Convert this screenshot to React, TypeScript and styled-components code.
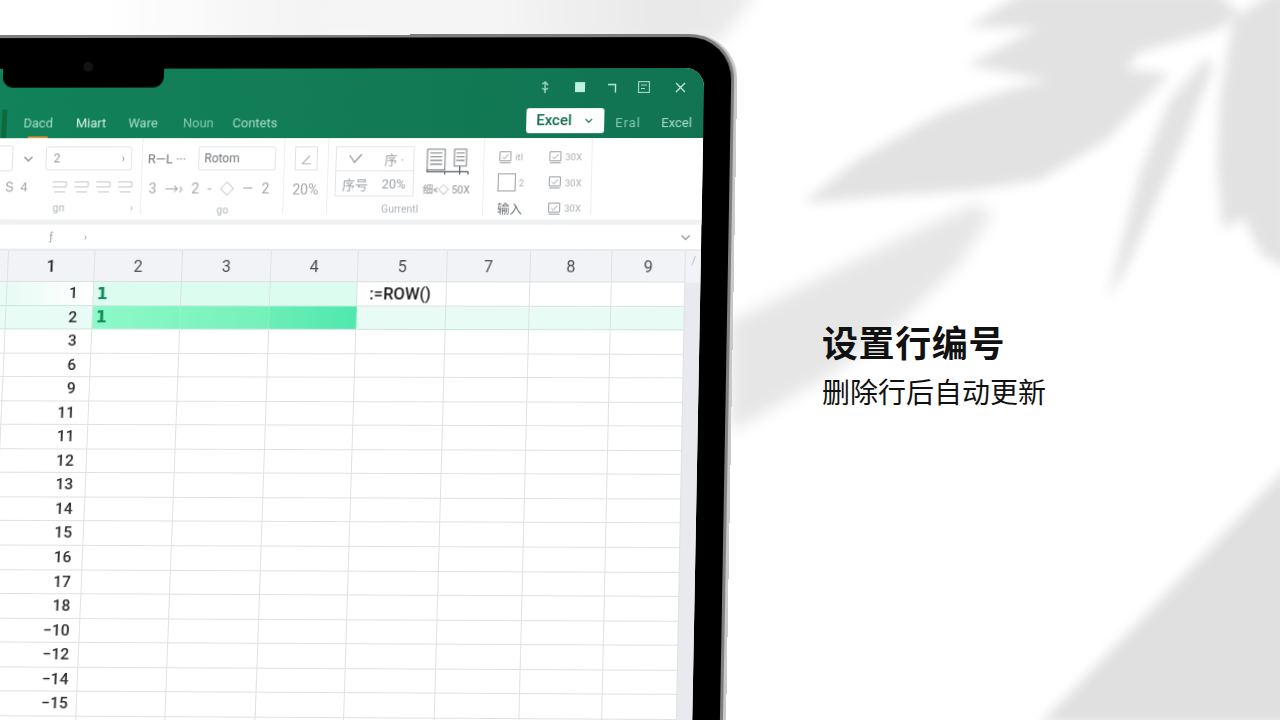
import React from "react";
import styled, { createGlobalStyle } from "styled-components";

const GlobalStyle = createGlobalStyle`
  html, body {
    margin: 0;
    padding: 0;
    background: #fff;
  }
  body {
    font-family: "Roboto", "Noto Sans CJK SC", sans-serif;
  }
`;

const COLUMNS = "73px 87px 88px 89px 87px 89px 83px 81px 73px";
const ROWS = ["1", "2", "3", "6", "9", "11", "11", "12", "13", "14", "15", "16", "17", "18", "−10", "−12", "−14", "−15", "", ""];
const HEADERS = ["", "1", "2", "3", "4", "5", "7", "8", "9"];

function LeafShadows() {
  return (
    <Shadows viewBox="0 0 1280 720">
      <defs>
        <filter id="soft" x="-10%" y="-10%" width="120%" height="120%">
          <feGaussianBlur stdDeviation="6" />
        </filter>
        <filter id="softer" x="-20%" y="-20%" width="140%" height="140%">
          <feGaussianBlur stdDeviation="8" />
        </filter>
        <linearGradient id="topFade" x1="0" x2="1" y1="0" y2="0">
          <stop offset="0" stopColor="#fff" />
          <stop offset="0.3" stopColor="#f4f4f4" />
          <stop offset="0.6" stopColor="#f5f5f5" />
          <stop offset="0.85" stopColor="#e8e8e8" />
          <stop offset="1" stopColor="#ebebeb" />
        </linearGradient>
      </defs>
      <polygon points="100,-20 760,-20 745,10 715,45 100,45" fill="url(#topFade)" filter="url(#softer)" />
      <g filter="url(#soft)" fill="#e2e2e2">
        <polygon points="1027,-10 967,27 1037,28 967,65 1047,80 1007,90 940,113 857,160 803,203 900,195 973,190 1040,180 1107,140 1170,73 1127,70 1137,53 1217,30 1240,13 1213,-10" />
        <polygon points="1207,57 1170,100 1140,173 1107,300 1127,267 1157,200 1187,133 1213,67" />
        <polygon points="1275,-10 1233,20 1220,100 1217,167 1223,230 1243,217 1262,255 1290,270 1290,-10" />
      </g>
      <polygon points="1290,465 1040,724 1290,724" fill="#e0e0e0" filter="url(#soft)" />
      <polygon points="730,322 907,235 973,205 993,212 957,267 900,322 830,375 730,432" fill="#e6e6e6" filter="url(#softer)" />
    </Shadows>
  );
}

function DocPair() {
  return (
    <DocIcon width="43" height="28" viewBox="0 0 46 30" fill="none" stroke="#7c8184" strokeWidth="1.1">
      <rect x="1" y="1" width="19" height="22" />
      <path d="M4 5h13M4 9h13M4 13h13M4 17h13" />
      <rect x="30" y="1" width="13" height="18" />
      <path d="M32 5h9M32 9h9M32 13h9" />
      <path d="M1 23v2h44v3M20 25v3M36 19v9" strokeWidth="1.2" stroke="#555a5d" />
    </DocIcon>
  );
}

function TickBox() {
  return (
    <svg width="14" height="14" viewBox="0 0 14 14" fill="none" stroke="#9b9fa2" strokeWidth="1">
      <path d="M1.5 1.5h11v9h-11zM1.5 12.5h11" />
      <path d="M4 6.5l2 2 4-4.5" />
    </svg>
  );
}

function AlignIcon() {
  return (
    <svg width="16" height="13" viewBox="0 0 16 13" fill="none" stroke="#c2c6c9" strokeWidth="1">
      <path d="M1 1.5h14M1 6.5h14M3 11.5h11M15 1.5v5" />
    </svg>
  );
}

function Chevron({ color = "#8d9296" }: { color?: string }) {
  return (
    <svg width="11" height="7" viewBox="0 0 11 7" fill="none" stroke={color} strokeWidth="1.5">
      <path d="M1.5 1.5L5.5 5.5L9.5 1.5" />
    </svg>
  );
}

function WindowControls() {
  return (
    <Controls>
      <svg width="10" height="14" viewBox="0 0 10 14" fill="none" stroke="#9fd8c3" strokeWidth="1.4">
        <path d="M5 1v12M2 4l3-2 3 3M2 8l3 2 3-2" />
      </svg>
      <FilledSquare />
      <svg width="10" height="11" viewBox="0 0 10 11" fill="none" stroke="#bfe9da" strokeWidth="1.4">
        <path d="M1 2.5h7.5v8" />
      </svg>
      <svg width="12" height="12" viewBox="0 0 12 12" fill="none" stroke="#a9dcc9" strokeWidth="1.1">
        <rect x="0.6" y="0.6" width="10.8" height="10.8" />
        <path d="M3 4h6M3 7.5h4" />
      </svg>
      <CloseIcon width="11" height="11" viewBox="0 0 11 11" fill="none" stroke="#c8ecdf" strokeWidth="1.3">
        <path d="M1 1l9 9M10 1l-9 9" />
      </CloseIcon>
    </Controls>
  );
}

function Ribbon() {
  return (
    <RibbonBar>
      <Group $width={204}>
        <ToolRow>
          <DropBox />
          <ChevronSlot>
            <Chevron />
          </ChevronSlot>
          <Field $width={87}>
            2<FieldEnd>›</FieldEnd>
          </Field>
        </ToolRow>
        <ToolRow $left={66}>
          <ToolText $width={47}>Տ&nbsp; 4</ToolText>
          <AlignSet>
            <AlignIcon />
            <AlignIcon />
            <AlignIcon />
            <AlignIcon />
          </AlignSet>
        </ToolRow>
        <GroupLabel $left={115}>
          gп<LabelEnd>›</LabelEnd>
        </GroupLabel>
      </Group>
      <Group $width={143}>
        <ToolRow $left={5}>
          <ToolText $width={51} $dark>
            R—L ···
          </ToolText>
          <Field $width={78} $dark>
            Rotom
          </Field>
        </ToolRow>
        <ToolRow $left={7}>
          <ToolText $width={130} $spread>
            3 →› 2 - ◇ — 2
          </ToolText>
        </ToolRow>
        <GroupLabel $left={76}>go</GroupLabel>
      </Group>
      <Group $width={44} $center>
        <SmallBox>∠</SmallBox>
        <PercentText>20%</PercentText>
      </Group>
      <Group $width={156}>
        <TableRow>
          <MiniTable>
            <MiniCell>
              <svg width="14" height="11" viewBox="0 0 14 11" fill="none" stroke="#8d9296" strokeWidth="1.2">
                <path d="M1 2l5 7 7-8" />
              </svg>
            </MiniCell>
            <MiniCell>序 ·</MiniCell>
            <MiniCell>序号</MiniCell>
            <MiniCell>20%</MiniCell>
          </MiniTable>
          <DocColumn>
            <DocPair />
            <DocCaption>细&lt;◇ 50X</DocCaption>
          </DocColumn>
        </TableRow>
        <GroupLabel $left={54}>Gurrentl</GroupLabel>
      </Group>
      <Group $width={108} $last>
        <StackGrid>
          <StackCell>
            <TickBox />
            <TinyText>itl</TinyText>
          </StackCell>
          <StackCell>
            <TickBox />
            <TinyText>30X</TinyText>
          </StackCell>
          <StackCell>
            <BigSquare />
            <TinyText>2</TinyText>
          </StackCell>
          <StackCell>
            <TickBox />
            <TinyText>30X</TinyText>
          </StackCell>
          <StackCell>
            <InputText>输入</InputText>
          </StackCell>
          <StackCell>
            <TickBox />
            <TinyText>30X</TinyText>
          </StackCell>
        </StackGrid>
      </Group>
    </RibbonBar>
  );
}

function Sheet() {
  return (
    <SheetArea>
      <Cells>
        <SheetRow>
          {HEADERS.map((label, i) => (
            <HeaderCell key={i}>{label}</HeaderCell>
          ))}
        </SheetRow>
        {ROWS.map((label, r) => {
          const tone = r === 0 ? "first" : r === 1 ? "second" : "plain";
          return (
            <SheetRow key={r}>
              <Cell $tone={tone === "plain" ? "plain" : "soft"} />
              <RowNumber $tone={tone} $inset={15 - r * 0.42}>
                {label}
              </RowNumber>
              {[0, 1, 2].map((c) => (
                <Cell key={c} $tone={tone === "first" ? "mint" : tone === "second" ? "picked" : "plain"} $col={c}>
                  {c === 0 && tone !== "plain" && <GreenOne>1</GreenOne>}
                </Cell>
              ))}
              {[0, 1, 2, 3].map((c) => (
                <Cell key={c} $tone={tone === "second" ? "soft" : "plain"}>
                  {c === 0 && tone === "first" && <Formula>:=ROW()</Formula>}
                </Cell>
              ))}
            </SheetRow>
          );
        })}
      </Cells>
      <Scrollbar>
        <ScrollTick>/</ScrollTick>
      </Scrollbar>
    </SheetArea>
  );
}

export default function App() {
  return (
    <>
      <GlobalStyle />
      <Stage>
        <LeafShadows />
        <Device>
          <Notch>
            <Camera />
          </Notch>
          <Screen>
            <TitleBar>
              <WindowControls />
              <TabRow>
                <ActiveStub />
                <Tab $width={53}>
                  Dacd
                  <TabMark />
                </Tab>
                <Tab $width={53} $bright>
                  Miart
                </Tab>
                <Tab $width={55}>Ware</Tab>
                <Tab $width={50} $dim>
                  Noun
                </Tab>
                <Tab $width={60}>Contets</Tab>
                <TabSpacer />
                <ExcelButton>
                  Excel
                  <Chevron color="#0d6a4b" />
                </ExcelButton>
                <Tab $width={46} $dim $wide>
                  Eral
                </Tab>
                <Tab $width={42}>Excel</Tab>
              </TabRow>
            </TitleBar>
            <Ribbon />
            <Band />
            <FormulaBar>
              <FormulaGlyph>ƒ</FormulaGlyph>
              <FormulaGlyph>›</FormulaGlyph>
              <FormulaEnd>
                <Chevron color="#9a9fa3" />
              </FormulaEnd>
            </FormulaBar>
            <Sheet />
          </Screen>
        </Device>
        <Caption>
          <Title>设置行编号</Title>
          <Subtitle>删除行后自动更新</Subtitle>
        </Caption>
      </Stage>
    </>
  );
}

const Stage = styled.div`
  position: relative;
  display: flex;
  align-items: flex-start;
  width: 1280px;
  height: 720px;
  overflow: hidden;
  background: #fff;
`;

const Shadows = styled.svg`
  position: absolute;
  inset: 0;
  width: 1280px;
  height: 720px;
`;

const Device = styled.div`
  position: relative;
  flex: none;
  box-sizing: border-box;
  width: 795px;
  height: 780px;
  margin: 34px 3px 0 -60px;
  padding: 31px 27px 0 0;
  background: #000;
  border-top: 3px solid #7d7d7d;
  border-right: 3px solid #7f7f7f;
  border-top-right-radius: 46px;
  box-shadow: 3px 0 0 #c9c9c9;
  transform-origin: right top;
  transform: perspective(2000px) rotateX(4.3deg) rotateY(-1.2deg) skewX(-1deg);
`;

const Notch = styled.div`
  position: absolute;
  left: 59px;
  top: 0;
  width: 163px;
  height: 50px;
  background: #000;
  border-radius: 0 0 11px 11px;
  z-index: 2;
`;

const Camera = styled.div`
  position: absolute;
  left: 81px;
  top: 24px;
  width: 10px;
  height: 10px;
  border-radius: 50%;
  background: #141414;
`;

const Screen = styled.div`
  width: 765px;
  height: 740px;
  overflow: hidden;
  background: #fff;
  border-top-right-radius: 19px;
  display: flex;
  flex-direction: column;
`;

const TitleBar = styled.div`
  flex: none;
  height: 70px;
  display: flex;
  flex-direction: column;
  background: linear-gradient(90deg, #11835b 0%, #127c56 50%, #117352 100%);
`;

const Controls = styled.div`
  height: 38px;
  display: flex;
  align-items: center;
  justify-content: flex-end;
  gap: 21px;
  padding: 0 18px 0 0;
  & > * {
    flex: none;
  }
`;

const CloseIcon = styled.svg`
  margin-left: 4.5px;
`;

const FilledSquare = styled.div`
  width: 10px;
  height: 10px;
  background: #bdf0e0;
  margin: 0 1px 0 4px;
`;

const TabRow = styled.div`
  flex: 1;
  display: flex;
  align-items: center;
  padding-left: 60px;
  font-size: 13px;
`;

const ActiveStub = styled.div`
  align-self: flex-end;
  width: 5px;
  height: 29px;
  background: #0d6a3c;
  margin-right: 17px;
`;

const Tab = styled.div<{ $width: number; $bright?: boolean; $dim?: boolean; $wide?: boolean }>`
  position: relative;
  flex: none;
  box-sizing: border-box;
  width: ${(p) => p.$width}px;
  height: 100%;
  padding-top: 5px;
  line-height: 24px;
  letter-spacing: ${(p) => (p.$wide ? 1 : 0)}px;
  color: ${(p) => (p.$bright ? "#d3f0e4" : p.$dim ? "#86c9b0" : "#a9dfca")};
`;

const TabMark = styled.div`
  position: absolute;
  left: 5px;
  bottom: 0;
  width: 20px;
  height: 2px;
  background: #e5913a;
`;

const TabSpacer = styled.div`
  flex: 1;
`;

const ExcelButton = styled.div`
  flex: none;
  box-sizing: border-box;
  width: 78px;
  height: 25px;
  margin: 0 11px 4px 0;
  padding: 0 11px 0 10px;
  display: flex;
  align-items: center;
  justify-content: space-between;
  background: #fff;
  border-radius: 3px;
  color: #0d6a4b;
  font-family: "Roboto", sans-serif;
  font-size: 15px;
  font-weight: 500;
  svg {
    width: 9px;
  }
`;

const RibbonBar = styled.div`
  flex: none;
  height: 81px;
  display: flex;
  background: #fff;
  color: #8f9498;
  font-size: 12px;
  overflow: hidden;
  filter: blur(0.3px);
`;

const Group = styled.div<{ $width: number; $center?: boolean; $last?: boolean }>`
  position: relative;
  flex: none;
  box-sizing: border-box;
  width: ${(p) => p.$width}px;
  height: 76px;
  padding-top: 8px;
  display: flex;
  flex-direction: column;
  align-items: ${(p) => (p.$center ? "center" : "stretch")};
  gap: 7px;
  border-right: 1px solid #eceef0;
`;

const ToolRow = styled.div<{ $left?: number }>`
  height: 24px;
  display: flex;
  align-items: center;
  padding-left: ${(p) => p.$left ?? 0}px;
`;

const DropBox = styled.div`
  flex: none;
  width: 72px;
  height: 24px;
  border: 1px solid #e1e3e5;
  border-left: 0;
  border-radius: 0 3px 3px 0;
`;

const ChevronSlot = styled.div`
  flex: none;
  width: 33px;
  padding-left: 10px;
  box-sizing: border-box;
`;

const Field = styled.div<{ $width: number; $dark?: boolean }>`
  flex: none;
  position: relative;
  box-sizing: border-box;
  width: ${(p) => p.$width}px;
  height: 24px;
  line-height: 22px;
  padding-left: ${(p) => (p.$dark ? 5 : 7)}px;
  border: 1px solid #e3e5e7;
  border-radius: 2px;
  color: ${(p) => (p.$dark ? "#6f7478" : "#8f9498")};
  font-size: 12px;
`;

const FieldEnd = styled.span`
  position: absolute;
  right: 6px;
`;

const ToolText = styled.div<{ $width: number; $dark?: boolean; $spread?: boolean }>`
  flex: none;
  width: ${(p) => p.$width}px;
  font-size: ${(p) => (p.$spread ? 14 : 13)}px;
  word-spacing: ${(p) => (p.$spread ? 5 : 0)}px;
  color: ${(p) => (p.$dark ? "#6f7478" : "#a2a6a9")};
  white-space: nowrap;
`;

const AlignSet = styled.div`
  display: flex;
  gap: 6px;
`;

const GroupLabel = styled.div<{ $left: number }>`
  padding-left: ${(p) => p.$left}px;
  margin-top: 0;
  line-height: 12px;
  font-size: 10.5px;
  color: #b0b4b7;
`;

const LabelEnd = styled.span`
  margin-left: 66px;
`;

const SmallBox = styled.div`
  width: 23px;
  height: 24px;
  box-sizing: border-box;
  border: 1px solid #dfe1e3;
  display: flex;
  align-items: center;
  justify-content: center;
  font-size: 12px;
  color: #9ca1a4;
`;

const PercentText = styled.div`
  line-height: 24px;
  font-size: 14px;
  color: #a0a4a7;
`;

const TableRow = styled.div`
  display: flex;
  gap: 9px;
  padding-left: 7px;
  height: 50px;
`;

const MiniTable = styled.div`
  flex: none;
  width: 79px;
  height: 50px;
  box-sizing: border-box;
  display: grid;
  grid-template-columns: 1fr 1fr;
  grid-template-rows: 1fr 1fr;
  border: 1px solid #e3e5e7;
`;

const MiniCell = styled.div`
  display: flex;
  align-items: center;
  justify-content: center;
  font-size: 13px;
  color: #9ca1a4;
  &:nth-child(-n + 2) {
    border-bottom: 1px solid #e3e5e7;
  }
`;

const DocColumn = styled.div`
  display: flex;
  flex-direction: column;
  gap: 5px;
  padding-top: 2px;
`;

const DocIcon = styled.svg`
  margin-left: 3px;
`;

const DocCaption = styled.div`
  font-size: 10.5px;
  color: #8d9296;
  white-space: nowrap;
`;

const StackGrid = styled.div`
  display: grid;
  grid-template-columns: 50px 50px;
  grid-auto-rows: 25.5px;
  padding-left: 14px;
  margin-top: -2px;
`;

const StackCell = styled.div`
  display: flex;
  align-items: center;
  gap: 3px;
`;

const TinyText = styled.span`
  font-size: 9.5px;
  color: #a9adb0;
`;

const BigSquare = styled.div`
  width: 18px;
  height: 18px;
  border: 1.5px solid #9a9ea1;
  box-sizing: border-box;
`;

const InputText = styled.span`
  font-size: 12.5px;
  color: #6f7477;
`;

const Band = styled.div`
  flex: none;
  height: 5px;
  background: #eef0f1;
`;

const FormulaBar = styled.div`
  flex: none;
  box-sizing: border-box;
  height: 26px;
  display: flex;
  align-items: center;
  padding-left: 113px;
  gap: 31px;
  border-bottom: 2px solid #e7e9ea;
  font-size: 11px;
  color: #9a9fa3;
`;

const FormulaGlyph = styled.span`
  flex: none;
`;

const FormulaEnd = styled.span`
  margin-left: auto;
  margin-right: 10px;
  display: flex;
`;

const SheetArea = styled.div`
  flex: 1;
  display: flex;
  min-height: 0;
`;

const Cells = styled.div`
  flex: none;
  display: flex;
  flex-direction: column;
`;

const SheetRow = styled.div`
  display: grid;
  grid-template-columns: ${COLUMNS};
`;

const HeaderCell = styled.div`
  height: 31px;
  box-sizing: border-box;
  display: flex;
  align-items: center;
  justify-content: center;
  background: #f2f3f7;
  border-right: 1px solid #dfe1e5;
  border-bottom: 1px solid #dcdfe2;
  font-size: 16px;
  color: #4a4d50;
  &:nth-child(2) {
    color: #222;
    font-weight: 500;
  }
`;

type Tone = "plain" | "soft" | "mint" | "picked";

const toneFill: Record<Tone, string> = {
  plain: "#fff",
  soft: "#e8fbf5",
  mint: "#dcfcf0",
  picked: "#78f3bc",
};

const pickedFill = [
  "linear-gradient(90deg, #8ff8ca, #80f5c0)",
  "linear-gradient(90deg, #82f5c2, #74f1bb)",
  "linear-gradient(90deg, #6aeeb6, #4fe8ae)",
];

const Cell = styled.div<{ $tone: Tone; $col?: number }>`
  box-sizing: border-box;
  height: 23.55px;
  display: flex;
  align-items: center;
  background: ${(p) => (p.$tone === "picked" ? pickedFill[p.$col ?? 0] : toneFill[p.$tone])};
  border-right: 1px solid ${(p) => (p.$tone === "picked" ? "transparent" : "#dfe1e4")};
  border-bottom: 1px solid ${(p) => (p.$tone === "plain" ? "#dfe1e4" : "#c7e8dc")};
`;

const RowNumber = styled.div<{ $tone: string; $inset: number }>`
  box-sizing: border-box;
  height: 23.55px;
  padding-right: ${(p) => p.$inset}px;
  text-align: right;
  line-height: 23px;
  font-size: 15.5px;
  font-weight: 500;
  color: #2c2e30;
  background: ${(p) =>
    p.$tone === "first"
      ? "linear-gradient(90deg, #e8fbf5, #fff)"
      : p.$tone === "second"
        ? "#e8fbf5"
        : "#fff"};
  border-right: 1px solid #dfe1e4;
  border-bottom: 1px solid ${(p) => (p.$tone === "plain" ? "#dfe1e4" : "#c7e8dc")};
`;

const GreenOne = styled.span`
  margin-left: 3px;
  font-family: "DejaVu Sans", sans-serif;
  font-size: 16px;
  font-weight: 700;
  color: #108a5e;
`;

const Formula = styled.span`
  margin-left: 12px;
  font-size: 16.5px;
  font-weight: 500;
  color: #1c1c1c;
  white-space: nowrap;
`;

const Scrollbar = styled.div`
  flex: 1;
  position: relative;
  background: linear-gradient(180deg, #f2f3f6 0, #f2f3f6 31px, #e8eaed 31px);
`;

const ScrollTick = styled.span`
  position: absolute;
  left: 6px;
  top: 4px;
  font-size: 10px;
  color: #a8acaf;
`;

const Caption = styled.div`
  position: relative;
  flex: none;
  margin: 315px 0 0 84px;
  color: #111;
  font-family: "Noto Sans CJK SC", sans-serif;
`;

const Title = styled.div`
  font-size: 36px;
  font-weight: 700;
  line-height: 52px;
  letter-spacing: 0.6px;
`;

const Subtitle = styled.div`
  font-size: 28px;
  font-weight: 400;
  line-height: 49px;
`;
